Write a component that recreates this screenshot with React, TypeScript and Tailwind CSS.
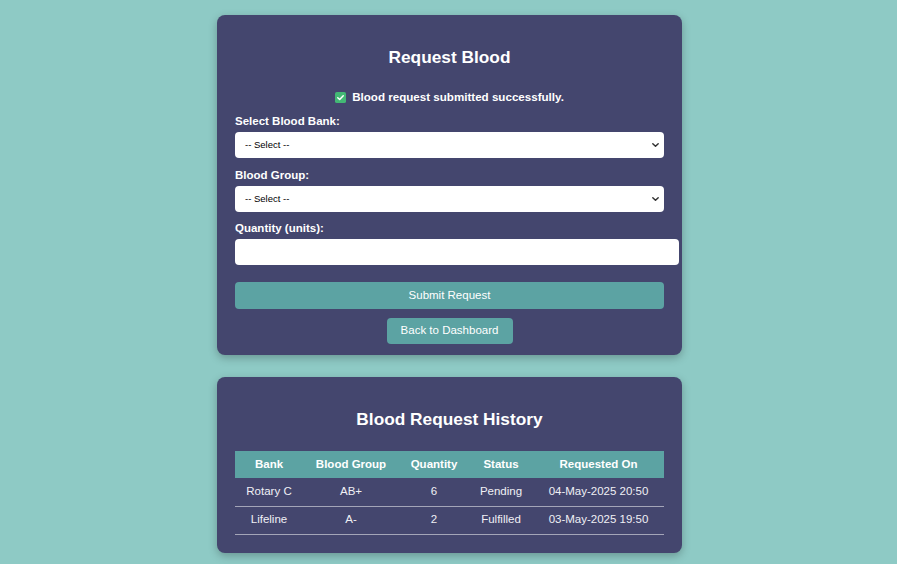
import React from 'react';

const rows = [
  { bank: 'Rotary C', group: 'AB+', qty: 6, status: 'Pending', on: '04-May-2025 20:50' },
  { bank: 'Lifeline', group: 'A-', qty: 2, status: 'Fulfilled', on: '03-May-2025 19:50' },
];

const Chevron = () => (
  <svg className="pointer-events-none absolute right-[4px] top-1/2 -translate-y-1/2" width="9" height="9" viewBox="0 0 10 10">
    <path d="M2 3.5 L5 6.5 L8 3.5" fill="none" stroke="#333" strokeWidth="1.6" strokeLinecap="round" strokeLinejoin="round" />
  </svg>
);

const SelectBox = () => (
  <div className="relative w-full">
    <select className="block h-[26px] w-full appearance-none rounded-[4px] bg-white pl-[10px] text-[9.5px] text-black outline-none">
      <option>-- Select --</option>
    </select>
    <Chevron />
  </div>
);

const Label = ({ children }: { children: React.ReactNode }) => (
  <label className="mb-[4px] block text-[11.5px] font-bold leading-[14px] text-white">{children}</label>
);

const App: React.FC = () => {
  return (
    <div className="min-h-screen bg-[#8ecac5] pb-[11px] pl-[2px] pt-[15px] font-['Liberation_Sans',Arial,sans-serif]">
      {/* Request form */}
      <div className="mx-auto w-[465px] rounded-[8px] bg-[#44466e] px-[18px] pb-[11px] pt-[32px] shadow-[0_3px_8px_rgba(0,0,0,0.25)]">
        <h2 className="text-center text-[17.3px] font-bold leading-[20px] text-white">Request Blood</h2>

        <div className="mt-[23px] flex items-center justify-center gap-[6px] text-[11.6px] font-bold leading-[14px] text-white">
          <svg width="11" height="11" viewBox="0 0 12 12">
            <rect x="0" y="0" width="12" height="12" rx="2" fill="#43b875" />
            <path d="M3 6.2 L5.1 8.2 L9 4" fill="none" stroke="#fff" strokeWidth="1.6" strokeLinecap="round" strokeLinejoin="round" />
          </svg>
          <span>Blood request submitted successfully.</span>
        </div>

        <div className="mt-[10px]">
          <Label>Select Blood Bank:</Label>
          <SelectBox />
        </div>
        <div className="mt-[10px]">
          <Label>Blood Group:</Label>
          <SelectBox />
        </div>
        <div className="mt-[9px]">
          <Label>Quantity (units):</Label>
          <input type="number" className="block h-[26px] w-[444px] rounded-[4px] bg-white px-[7px] text-[11.5px] outline-none" />
        </div>

        <button className="mt-[17px] block h-[27px] w-full rounded-[4px] bg-[#5ca3a3] text-[11.5px] text-white">
          Submit Request
        </button>
        <div className="mt-[9px] flex justify-center">
          <button className="h-[26px] w-[126px] rounded-[4px] bg-[#5ca3a3] text-[11.5px] text-white">
            Back to Dashboard
          </button>
        </div>
      </div>

      {/* History */}
      <div className="mx-auto mt-[22px] w-[465px] rounded-[8px] bg-[#44466e] px-[18px] pb-[18px] pt-[32px] shadow-[0_3px_8px_rgba(0,0,0,0.25)]">
        <h2 className="text-center text-[17.3px] font-bold leading-[20px] text-white">Blood Request History</h2>
        <table className="mt-[22px] w-full table-fixed border-collapse text-[11.5px]">
          <colgroup>
            <col className="w-[68px]" />
            <col className="w-[96px]" />
            <col className="w-[70px]" />
            <col className="w-[64px]" />
            <col className="w-[131px]" />
          </colgroup>
          <thead>
            <tr className="h-[27px] bg-[#5ca3a3] text-white">
              <th className="font-bold">Bank</th>
              <th className="font-bold">Blood Group</th>
              <th className="font-bold">Quantity</th>
              <th className="font-bold">Status</th>
              <th className="font-bold">Requested On</th>
            </tr>
          </thead>
          <tbody>
            {rows.map((r) => (
              <tr key={r.bank} className="h-[28px] border-b border-[#a4a5b8] text-[#f0f0f5]">
                <td className="text-center">{r.bank}</td>
                <td className="text-center">{r.group}</td>
                <td className="text-center">{r.qty}</td>
                <td className="text-center">{r.status}</td>
                <td className="text-center">{r.on}</td>
              </tr>
            ))}
          </tbody>
        </table>
      </div>
    </div>
  );
};

export default App;
